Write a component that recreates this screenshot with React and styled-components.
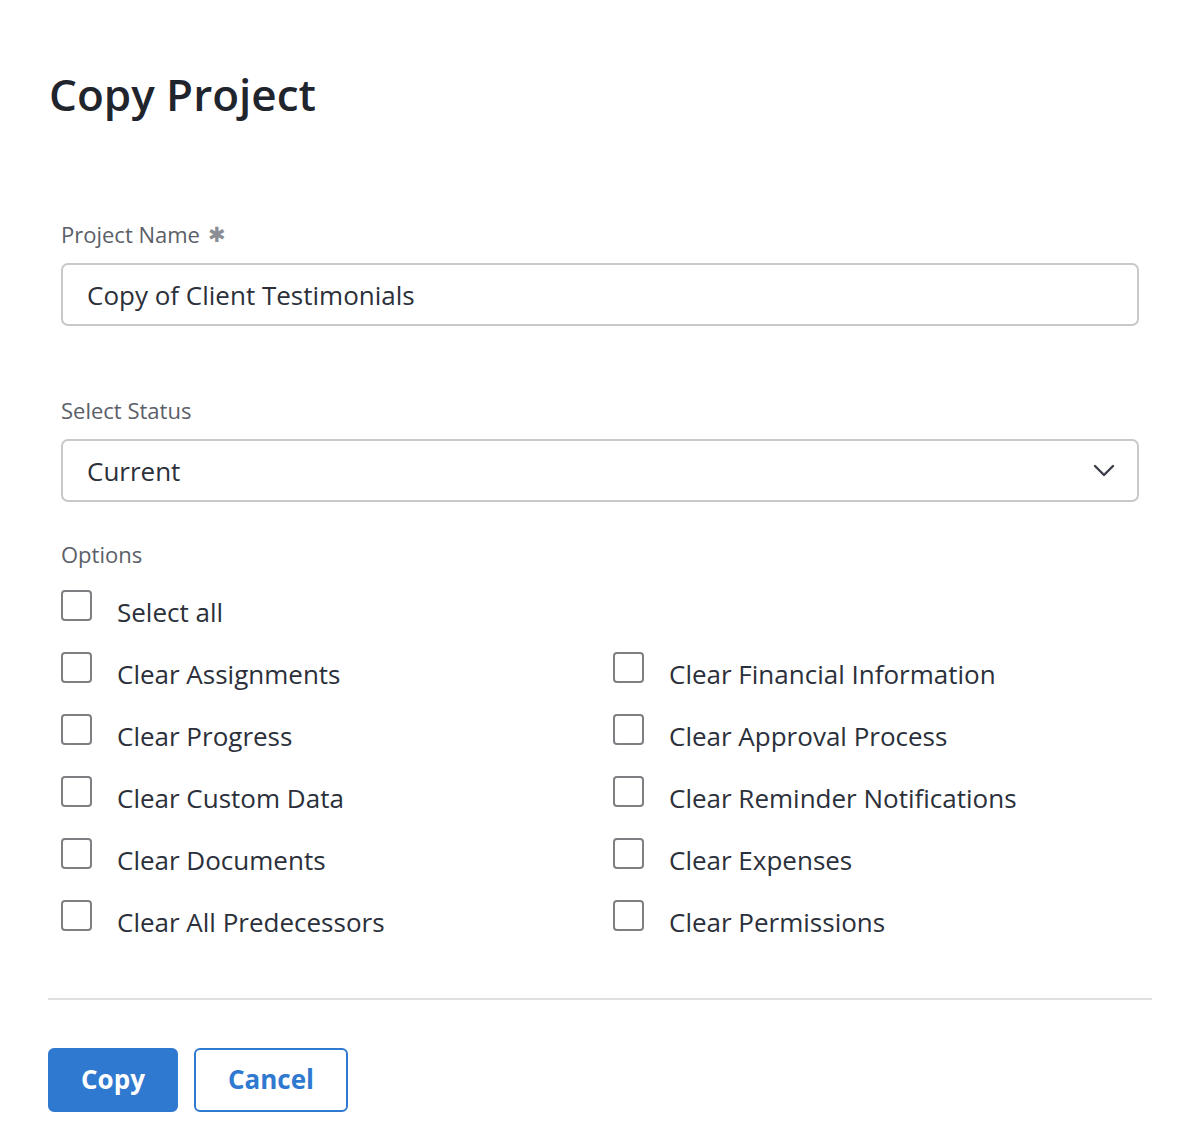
import React from "react";
import styled, { createGlobalStyle } from "styled-components";

const FONT = `"Open Sans", Lato, sans-serif`;

const Global = createGlobalStyle`
  html, body { margin: 0; padding: 0; background: #fff; }
  body { font-family: ${FONT}; color: #2b303a; }
  * { box-sizing: border-box; }
`;

const Modal = styled.div`
  width: 1198px;
  height: 1140px;
  background: #fff;
  padding: 66px 46px 0 48px;
  display: flex;
  flex-direction: column;
`;

const Title = styled.h1`
  margin: 0 0 0 1px;
  font-size: 44px;
  line-height: 56px;
  font-weight: 600;
  color: #1f242d;
`;

const Body = styled.div`
  padding: 0 13px;
  display: flex;
  flex-direction: column;
`;

const Field = styled.div`
  display: flex;
  flex-direction: column;
  margin-top: ${(p) => p.$top}px;
`;

const Label = styled.label`
  font-size: 22px;
  line-height: 28px;
  color: #5b6068;
  display: flex;
  align-items: center;
  gap: 8px;
`;

const Star = styled.span`
  color: #8a8e94;
  font-size: 21px;
`;

const Box = styled.div`
  margin-top: 15px;
  height: 63px;
  border: 2px solid #c9c9cb;
  border-radius: 7px;
  display: flex;
  align-items: center;
  justify-content: space-between;
  padding: 0 22px 0 24px;
  font-size: 26px;
  color: #2b303a;
`;

const Options = styled.div`
  margin-top: 38px;
`;

const Grid = styled.div`
  margin-top: 20px;
  display: grid;
  grid-template-columns: 552px 1fr;
  row-gap: 14px;
`;

const Item = styled.label`
  display: flex;
  align-items: center;
  gap: 25px;
  height: 48px;
  font-size: 26px;
  color: #2b303a;
  grid-column: ${(p) => (p.$full ? "1 / span 2" : "auto")};
`;

const Check = styled.span`
  width: 31px;
  height: 31px;
  border: 2px solid #7d7f83;
  border-radius: 4px;
  margin-top: -14px;
  flex: none;
`;

const Divider = styled.hr`
  margin: 52px 0 0 0;
  border: none;
  border-top: 2px solid #e0e0e0;
  width: 1104px;
`;

const Footer = styled.div`
  display: flex;
  gap: 16px;
  margin-top: 48px;
`;

const Button = styled.button`
  height: 64px;
  padding: 0 28px 3px;
  min-width: ${(p) => (p.$primary ? 130 : 154)}px;
  border-radius: 6px;
  border: 2px solid #2f79d0;
  background: ${(p) => (p.$primary ? "#2f79d0" : "#fff")};
  color: ${(p) => (p.$primary ? "#fff" : "#2f79d0")};
  font-family: ${FONT};
  font-size: 26px;
  font-weight: 700;
`;

const left = [
  "Clear Assignments",
  "Clear Progress",
  "Clear Custom Data",
  "Clear Documents",
  "Clear All Predecessors",
];
const right = [
  "Clear Financial Information",
  "Clear Approval Process",
  "Clear Reminder Notifications",
  "Clear Expenses",
  "Clear Permissions",
];

export default function App() {
  const items = [];
  left.forEach((l, i) => {
    items.push(l);
    items.push(right[i]);
  });
  return (
    <Modal>
      <Global />
      <Title>Copy Project</Title>
      <Body>
        <Field $top={98}>
          <Label>
            Project Name <Star>✱</Star>
          </Label>
          <Box>Copy of Client Testimonials</Box>
        </Field>
        <Field $top={70}>
          <Label>Select Status</Label>
          <Box>
            Current
            <svg width="22" height="14" viewBox="0 0 22 14" fill="none">
              <path d="M2 2l9 9 9-9" stroke="#3a3f48" strokeWidth="2.4" strokeLinecap="round" strokeLinejoin="round" />
            </svg>
          </Box>
        </Field>
        <Options>
          <Label>Options</Label>
          <Grid>
            <Item $full>
              <Check />
              Select all
            </Item>
            {items.map((t) => (
              <Item key={t}>
                <Check />
                {t}
              </Item>
            ))}
          </Grid>
        </Options>
      </Body>
      <Divider />
      <Footer>
        <Button $primary>Copy</Button>
        <Button>Cancel</Button>
      </Footer>
    </Modal>
  );
}
